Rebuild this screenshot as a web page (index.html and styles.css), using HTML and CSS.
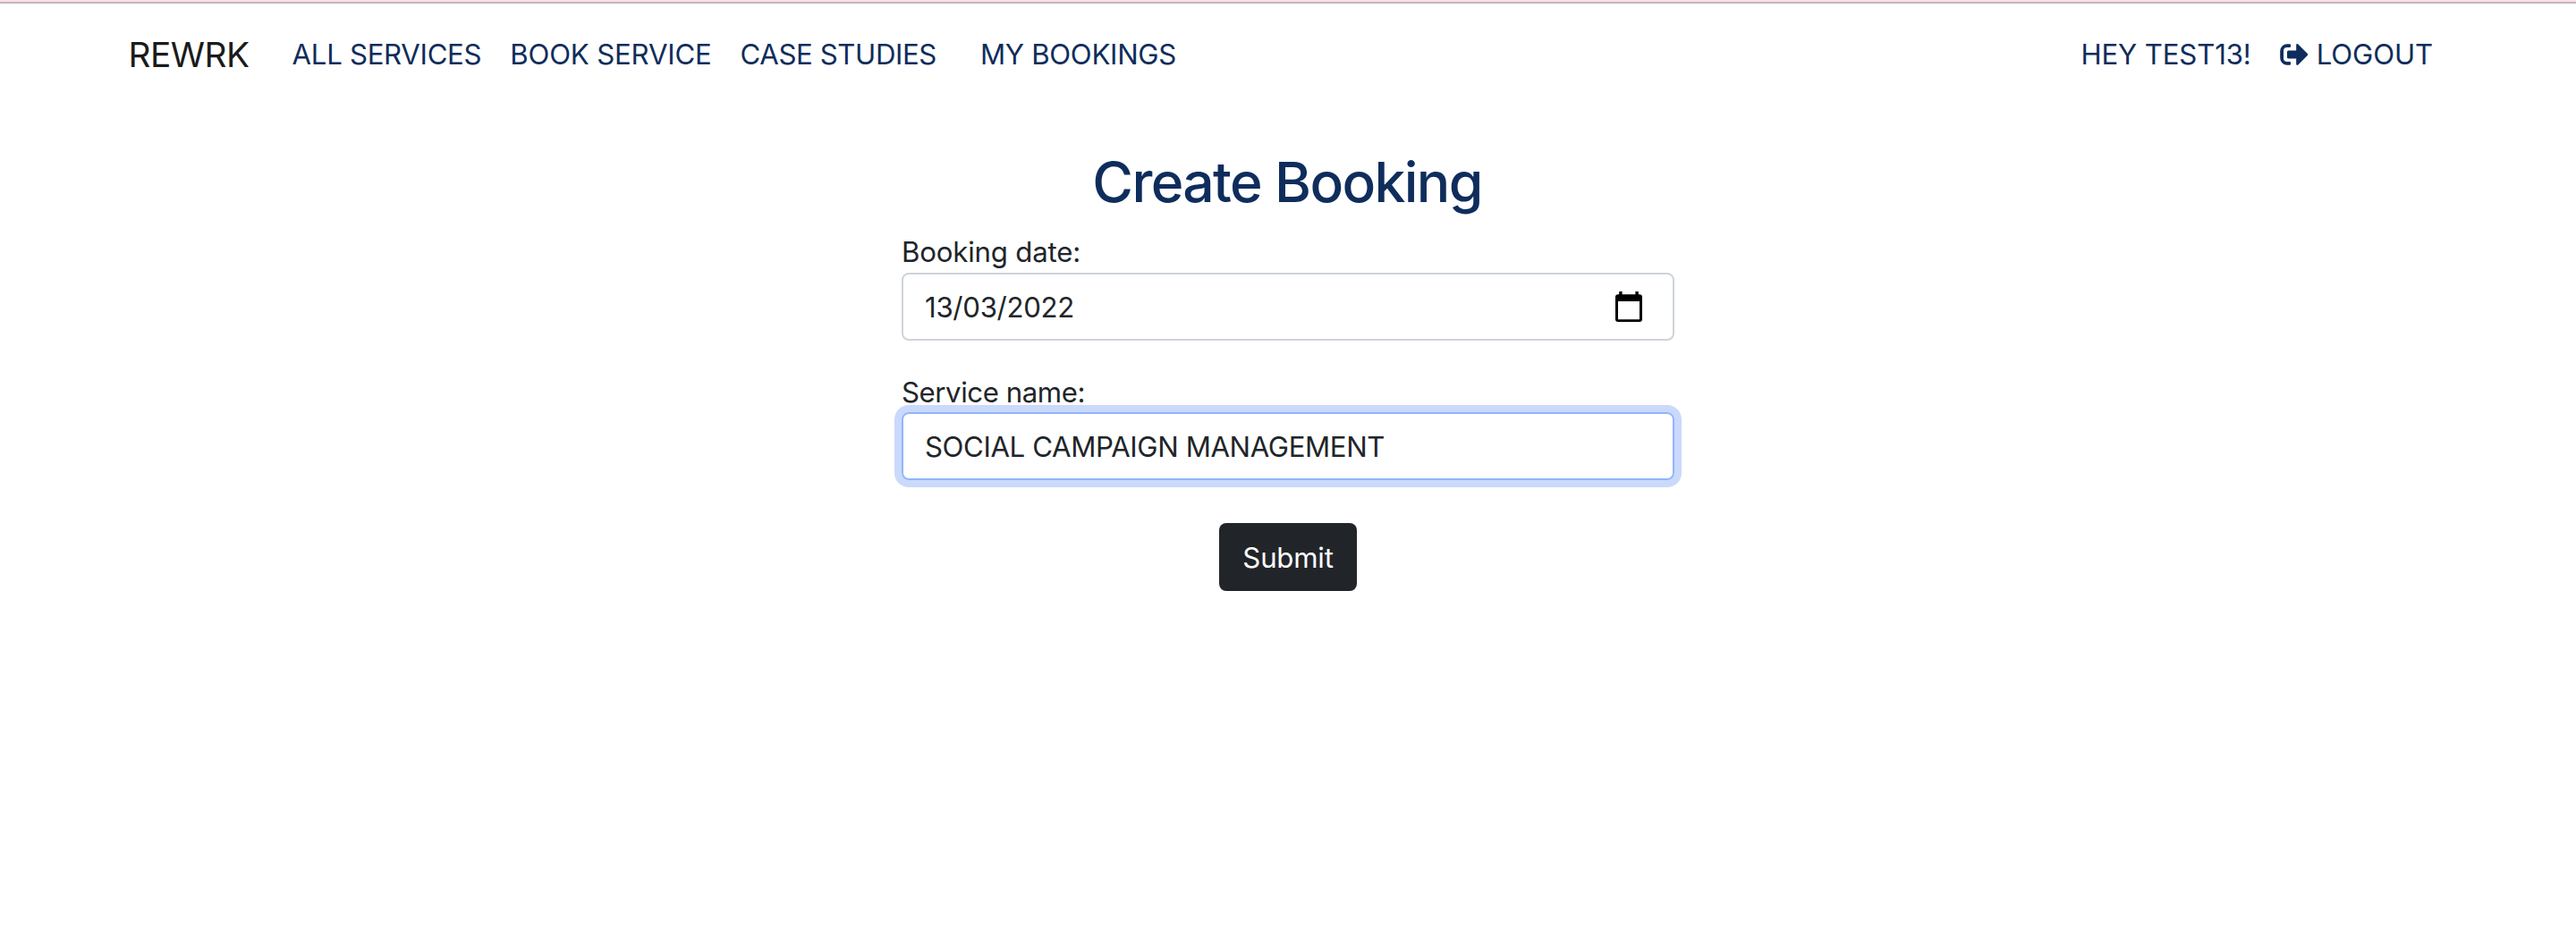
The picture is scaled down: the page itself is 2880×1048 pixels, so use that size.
FILE: index.html
```
<!DOCTYPE html>
<html lang="en">
<head>
<meta charset="utf-8">
<title>Create Booking</title>
<link rel="stylesheet" href="styles.css">
</head>
<body>
<header class="navbar">
  <a class="brand">REWRK</a>
  <nav class="links">
    <a class="link">ALL SERVICES</a>
    <a class="link link-book">BOOK SERVICE</a>
    <a class="link link-cases">CASE STUDIES</a>
    <a class="link link-mine">MY BOOKINGS</a>
  </nav>
  <div class="account">
    <span class="link greeting">HEY TEST13!</span>
    <a class="link logout">
      <svg class="logout-icon" viewBox="0 0 32 24" aria-hidden="true">
        <path d="M11 0.2H8A8 8 0 0 0 0.2 8V16A8 8 0 0 0 8 23.8H11Q12 23.8 12 22.8V21Q12 20 11 20H8A4 4 0 0 1 4 16V8A4 4 0 0 1 8 4H11Q12 4 12 3V1.2Q12 0.2 11 0.2Z"/>
        <path d="M20.4 0.5L30.8 11Q31.6 12 30.8 13L20.4 23.5Q18.2 24.6 18.2 22.5V16.6H9.6Q8 16.6 8 15V9Q8 7.4 9.6 7.4H18.2V1.5Q18.2 -0.6 20.4 0.5Z"/>
      </svg>
      LOGOUT
    </a>
  </div>
</header>
<main class="booking">
  <h1 class="title">Create Booking</h1>
  <form class="form">
    <label class="label" for="date">Booking date:</label>
    <div class="control">
      <input class="input date" id="date" value="13/03/2022">
      <svg class="calendar-icon" viewBox="0 0 30 34" aria-hidden="true">
        <path fill-rule="evenodd" d="M4.2 0H7.6V3.3H22.4V0H25.8V3.3H27Q30 3.3 30 6.3V31Q30 34 27 34H3Q0 34 0 31V6.3Q0 3.3 3 3.3H4.2ZM3 11V31.2H27V11Z"/>
      </svg>
    </div>
    <label class="label label-service" for="service">Service name:</label>
    <div class="control focused">
      <input class="input service" id="service" value="SOCIAL CAMPAIGN MANAGEMENT">
    </div>
    <button class="submit" type="button">Submit</button>
  </form>
</main>
</body>
</html>
```
FILE: styles.css
```
* {
  box-sizing: border-box;
}

body {
  margin: 0;
  min-height: 1048px;
  border-top: 2px solid #fbdfe5;
  background: #fff;
  color: #212529;
  font: 400 31.2px/48px Inter, "Liberation Sans", sans-serif;
}

.navbar {
  display: flex;
  align-items: center;
  height: 116px;
  padding: 0 160px 0 143.5px;
  border-top: 2px solid #c5b4bb;
}

.brand {
  margin-right: 48px;
  color: #1b1b1b;
  font-size: 38.8px;
  line-height: 60px;
  letter-spacing: -0.496px;
}

.links,
.account {
  display: flex;
  gap: 32px;
}

.link {
  color: #0f2d5c;
  letter-spacing: -0.3px;
  white-space: nowrap;
}

.link-book {
  letter-spacing: -0.192px;
}

.link-cases {
  letter-spacing: -0.4px;
}

.link-mine {
  margin-left: 17px;
  letter-spacing: -0.291px;
}

.account {
  margin-left: auto;
}

.greeting {
  letter-spacing: -0.143px;
}

.logout {
  display: flex;
  align-items: center;
  gap: 9px;
  letter-spacing: -0.124px;
}

.logout-icon {
  width: 32px;
  height: 24px;
  fill: #0f2d5c;
}

.booking {
  width: 864px;
  margin: 0 auto;
  padding-top: 47px;
}

.title {
  margin: 0 0 16px;
  padding-right: 2px;
  color: #0f2d5c;
  font-size: 62.4px;
  font-weight: 500;
  line-height: 77px;
  letter-spacing: -1.65px;
  text-align: center;
}

.form {
  display: flex;
  flex-direction: column;
}

.label {
  padding-top: 1px;
  line-height: 46px;
  letter-spacing: -0.183px;
}

.label:first-child {
  padding-top: 2px;
  line-height: 45px;
}

.label-service {
  margin-top: 34px;
  letter-spacing: -0.434px;
}

.control {
  display: flex;
  align-items: center;
  height: 76px;
  padding: 0 34px 0 24px;
  border: 2px solid #ced4da;
  border-radius: 8px;
}

.focused {
  margin-top: -1px;
  border-color: #8fb6fa;
  box-shadow: 0 0 0 8px #cad9fc;
}

.input {
  flex: 1;
  min-width: 0;
  padding: 1px 0 0;
  border: 0;
  outline: 0;
  background: transparent;
  color: inherit;
  font: inherit;
}

.date {
  letter-spacing: -0.309px;
}

.service {
  letter-spacing: -0.385px;
}

.calendar-icon {
  width: 30px;
  height: 34px;
  fill: #000;
}

.submit {
  align-self: center;
  width: 154px;
  height: 76px;
  margin-top: 48px;
  padding: 1px 0 0;
  border: 0;
  border-radius: 8px;
  background: #212529;
  color: #fff;
  font: inherit;
  letter-spacing: -0.224px;
}
```
